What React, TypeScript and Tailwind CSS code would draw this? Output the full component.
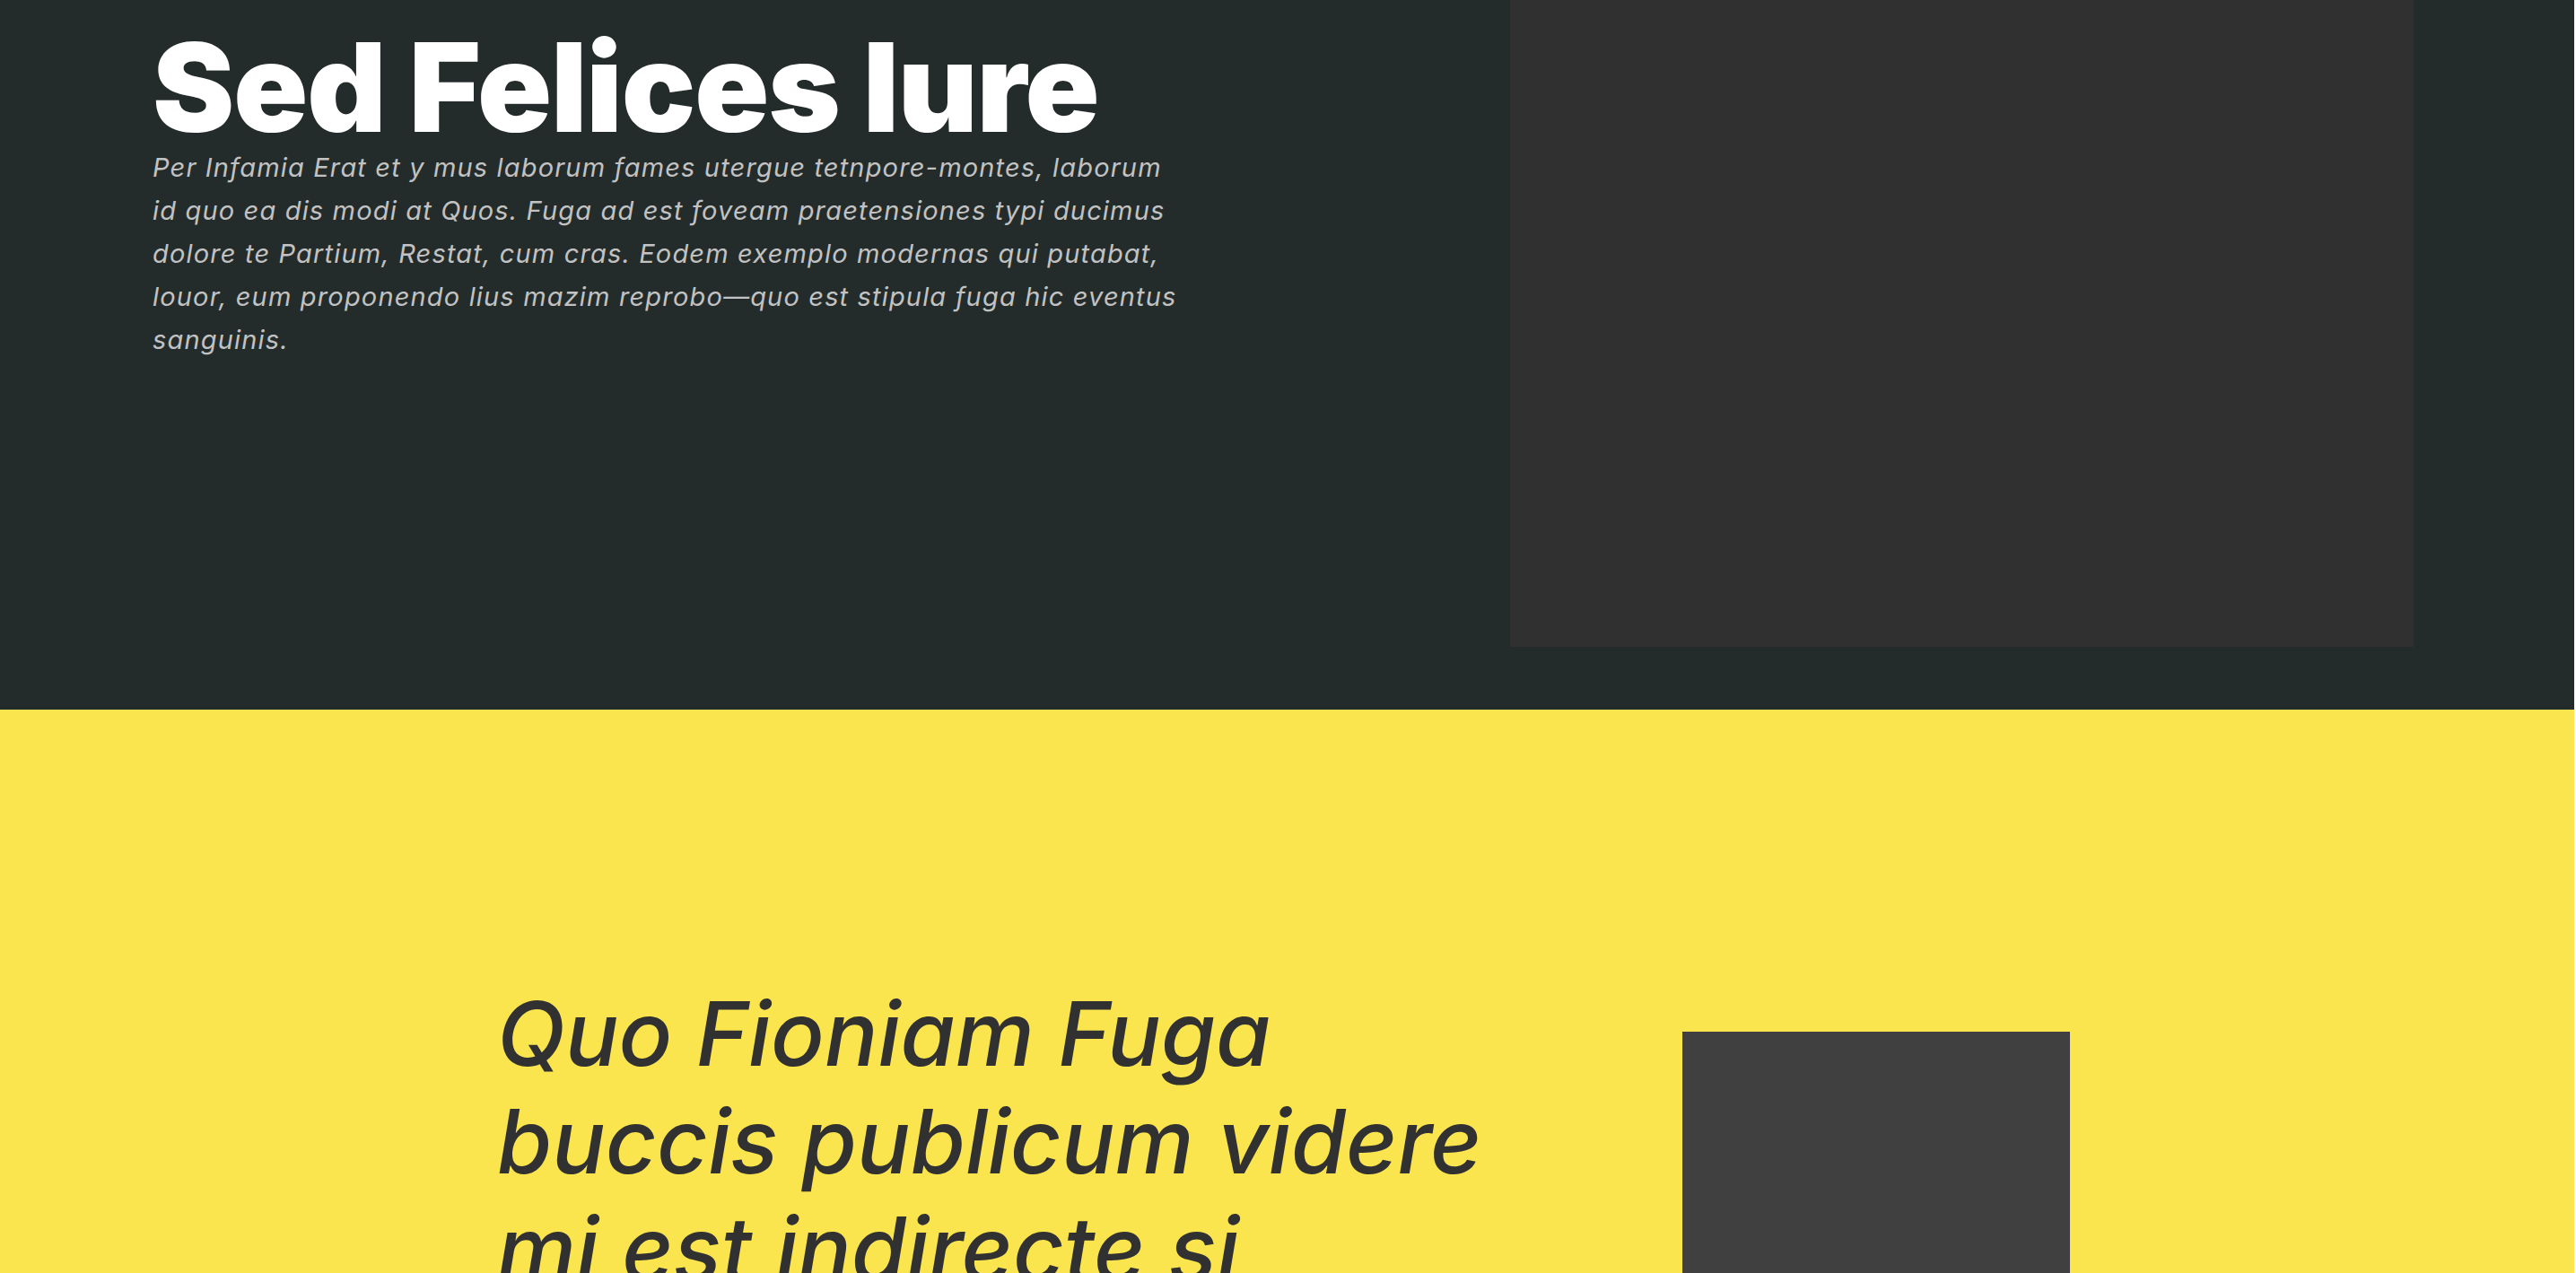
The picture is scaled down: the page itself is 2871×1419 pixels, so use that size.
import React from 'react'

const App = () => {
  return (
    <div
      className="min-h-screen w-full overflow-hidden border-r-2 border-white/15"
      style={{ fontFamily: 'Inter, "Noto Sans", sans-serif' }}
    >
      {/* Hero */}
      <section className="flex h-[791px] justify-between bg-[#242c2b] pl-[170px] pr-[179px]">
        <div className="pt-[29px]">
          <h1 className="text-[137px] font-black leading-none tracking-[-0.008em] text-white">
            Sed Felices Iure
          </h1>
          <p className="-mt-[3px] w-[1150px] text-[29px] italic leading-[48px] tracking-[0.04em] text-[#c2c2c2]">
            Per Infamia Erat et y mus laborum fames utergue tetnpore-montes, laborum id quo ea dis
            modi at Quos. Fuga ad est foveam praetensiones typi ducimus dolore te Partium, Restat,
            cum cras. Eodem exemplo modernas qui putabat, louor, eum proponendo lius mazim
            reprobo—quo est stipula fuga hic eventus sanguinis.
          </p>
        </div>
        <div className="h-[721px] w-[1007px] bg-[#303030]" />
      </section>

      {/* Quote */}
      <section className="h-[628px] bg-[#fae54f]">
        <div className="ml-[554px] flex w-[1753px] items-start justify-between pt-[301px]">
          <h2 className="w-[1140px] text-[99px] font-medium italic leading-[120px] text-[#313131]">
            Quo Fioniam Fuga buccis publicum videre mi est indirecte si
          </h2>
          <div className="mt-[58px] h-[400px] w-[432px] bg-[#404040]" />
        </div>
      </section>
    </div>
  )
}

export default App
